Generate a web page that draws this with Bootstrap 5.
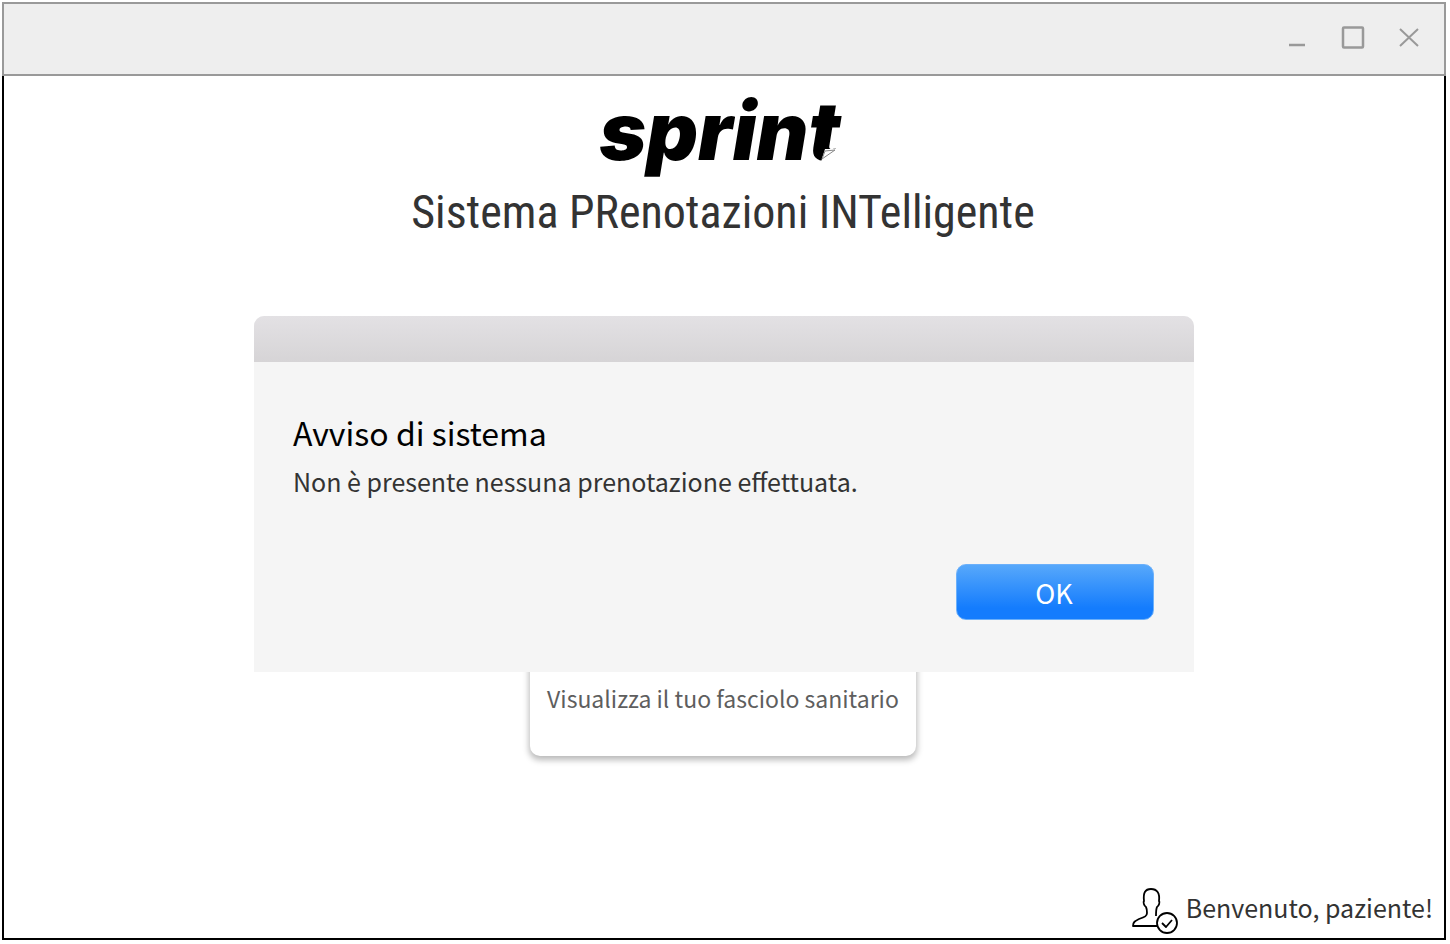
<!DOCTYPE html>
<html lang="it">
<head>
<meta charset="utf-8">
<meta name="viewport" content="width=device-width, initial-scale=1">
<title>Sprint</title>
<link href="https://cdn.jsdelivr.net/npm/bootstrap@5.3.0/dist/css/bootstrap.min.css" rel="stylesheet">
<style>
  body { font-family: "Noto Sans CJK SC", "Noto Sans", sans-serif; color: #333; background: #fff; }
  .page { padding: 2px 4px 4px 2px; }
  .app-window { border: 2px solid #000; border-top: 0; }
  .title-bar { margin: 0 -2px; height: 74px; padding: 0 23px 2px; gap: 32px; background: #eee; border: 2px solid #999; }
  .win-btn { width: 24px; height: 24px; line-height: 0; }
  .brand-mark { position: relative; height: 80px; margin-top: 18px; padding-right: 8px; font: italic 900 80px/74px Inter, sans-serif; color: #000; }
  .brand-fold { position: absolute; right: 10px; bottom: 12px; }
  .tagline { font: 400 46px/60px "Roboto Condensed", sans-serif; margin: 8px 0 74px; padding-right: 2px; }
  .stage { display: grid; justify-items: center; min-height: 440px; }
  .stage > * { grid-area: 1 / 1; }
  .notice { z-index: 1; width: 100%; max-width: 940px; align-self: start; background: #f5f5f5; border-radius: 10px 10px 0 0; }
  .notice-bar { height: 46px; border-radius: 10px 10px 0 0; background: linear-gradient(#e3e1e4, #d6d4d6); }
  .notice-body { padding: 46px 40px 52px 39px; }
  .notice-title { font-size: 32px; line-height: 48px; font-weight: 400; color: #000; }
  .notice-text { font-size: 25px; line-height: 50px; }
  .ok-btn { width: 198px; height: 56px; margin-top: 58px; padding: 2px 2px 0 0; border: 1px solid #6bb0fb; border-radius: 10px; color: #fff; font-size: 27px; line-height: 48px; background: linear-gradient(#57a8fb, #147cfd 80%); }
  .tile { align-self: end; width: 386px; height: 240px; padding-bottom: 40px; margin-right: 2px; border-radius: 10px; color: #5e5e5e; font-size: 23px; line-height: 36px; box-shadow: 0 3px 6px 1px rgba(0, 0, 0, .28); }
  .welcome { font-size: 25px; line-height: 42px; padding: 0 11px 4px 0; gap: 8px; }
</style>
</head>
<body>
<div class="page d-flex flex-column min-vh-100">
  <div class="app-window d-flex flex-column flex-grow-1">
    <header class="title-bar d-flex align-items-center justify-content-end">
      <button type="button" class="win-btn btn p-0 border-0" aria-label="Riduci a icona">
        <svg width="24" height="24" fill="none" stroke="#999" stroke-width="2.5"><path d="M4 19h16"/></svg>
      </button>
      <button type="button" class="win-btn btn p-0 border-0" aria-label="Ingrandisci">
        <svg width="24" height="24" fill="none" stroke="#999" stroke-width="2.5"><rect x="2" y="1.5" width="20" height="20" rx="1"/></svg>
      </button>
      <button type="button" class="win-btn btn p-0 border-0" aria-label="Chiudi">
        <svg width="24" height="24" fill="none" stroke="#999" stroke-width="2"><path d="M3 3 21 20M21 3 3 20"/></svg>
      </button>
    </header>

    <main class="flex-grow-1 d-flex flex-column align-items-center">
      <div class="brand-mark">sprint
        <svg class="brand-fold" width="18" height="14" viewBox="0 0 18 14"><path d="M5 1H18V14H1z" fill="#fff"/><path d="M5 3 15 2 2 11z" fill="#fff" stroke="#888" stroke-width="1"/></svg>
      </div>
      <h1 class="tagline text-center">Sistema PRenotazioni INTelligente</h1>

      <div class="stage w-100">
        <section class="notice" role="alertdialog" aria-labelledby="notice-title" aria-describedby="notice-text">
          <div class="notice-bar"></div>
          <div class="notice-body">
            <h2 class="notice-title m-0" id="notice-title">Avviso di sistema</h2>
            <p class="notice-text m-0" id="notice-text">Non è presente nessuna prenotazione effettuata.</p>
            <div class="text-end"><button type="button" class="ok-btn btn">OK</button></div>
          </div>
        </section>
        <a href="#" class="tile bg-white text-decoration-none text-nowrap d-flex align-items-end justify-content-center">Visualizza il tuo fasciolo sanitario</a>
      </div>
    </main>

    <footer class="welcome d-flex align-items-start justify-content-end">
      <svg width="48" height="48" viewBox="0 0 48 48" fill="none" stroke="#000" stroke-width="1.8" stroke-linejoin="round">
        <path d="M28 40H3c0-4 2-5 6-7 6-2 8-3 8-6 0-3 0-4-1-6-2-1-3-5-2-6-1-8 1-12 7-12s9 4 8 12c1 1 0 5-2 6-1 2-1 5-1 9"/>
        <circle cx="37" cy="37" r="10" fill="#fff"/>
        <path d="m32 37 4 4 6-7"/>
      </svg>
      <span>Benvenuto, paziente!</span>
    </footer>
  </div>
</div>
<script src="https://cdn.jsdelivr.net/npm/bootstrap@5.3.0/dist/js/bootstrap.bundle.min.js"></script>
</body>
</html>
